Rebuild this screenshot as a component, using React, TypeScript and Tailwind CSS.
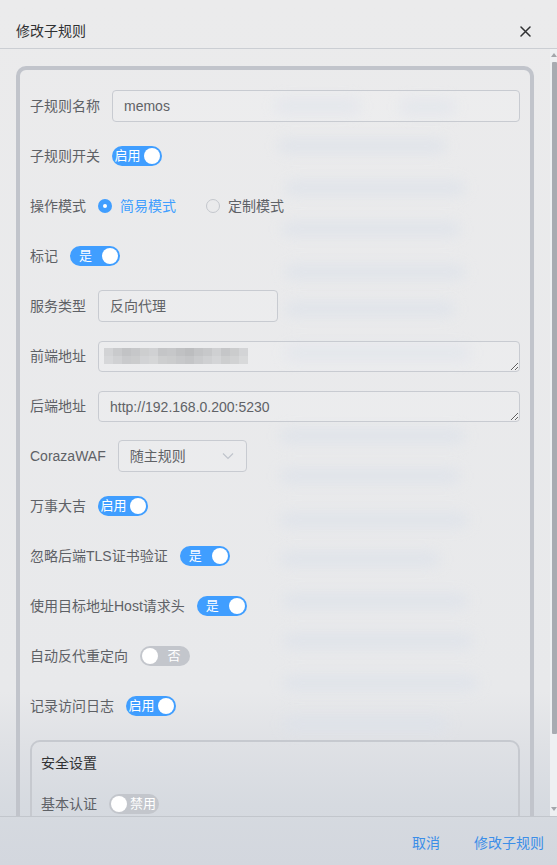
import React from "react";

const FONT = { fontFamily: '"Liberation Sans", "Noto Sans CJK SC", sans-serif' };

function Toggle({ on, text }: { on: boolean; text: string }) {
  return on ? (
    <div className="flex h-[20px] w-[50px] items-center rounded-[10px] bg-[#409eff]">
      <span className="w-[31px] text-center text-[13px] leading-[20px] text-white">{text}</span>
      <span className="ml-auto mr-[2px] h-[16px] w-[16px] rounded-full bg-white" />
    </div>
  ) : (
    <div className="flex h-[20px] w-[50px] items-center rounded-[10px] bg-[#c3c6cc]">
      <span className="ml-[2px] h-[16px] w-[16px] rounded-full bg-white" />
      <span className="flex-1 text-center text-[13px] leading-[20px] text-white">{text}</span>
    </div>
  );
}

function Row({ label, children, last }: { label: string; children: React.ReactNode; last?: boolean }) {
  return (
    <div className={`flex h-[32px] items-center ${last ? "" : "mb-[18px]"}`}>
      <span className="shrink-0 pr-[12px] text-[14px] leading-[32px] text-[#5e6166]">{label}</span>
      {children}
    </div>
  );
}

const mosaic = [
  ["#d2d3d5", "#c9cacc", "#c2c3c5", "#c6c7c9", "#cdcecf", "#d0d1d3", "#c4c5c7", "#c6c7c9", "#c0c1c3", "#bcbdbf", "#c3c4c6", "#c7c8ca", "#cfd0d2", "#c5c6c8", "#cbcccd", "#d3d4d6"],
  ["#d6d7d9", "#d0d1d3", "#c9cacc", "#cbcccd", "#d2d3d5", "#d5d6d7", "#cdcecf", "#cbcccd", "#c7c8ca", "#c4c5c7", "#cacbcd", "#cfd0d2", "#d4d5d7", "#cdcecf", "#d1d2d3", "#d8d9da"],
];

const bands = [
  { t: 100, l: 275, w: 85 },
  { t: 101, l: 400, w: 55 },
  { t: 140, l: 278, w: 168 },
  { t: 182, l: 285, w: 180 },
  { t: 223, l: 282, w: 178 },
  { t: 266, l: 285, w: 180 },
  { t: 303, l: 285, w: 170 },
  { t: 347, l: 285, w: 185 },
  { t: 430, l: 280, w: 185 },
  { t: 470, l: 280, w: 180 },
  { t: 514, l: 280, w: 188 },
  { t: 553, l: 280, w: 160 },
  { t: 595, l: 283, w: 185 },
  { t: 635, l: 283, w: 190 },
  { t: 677, l: 283, w: 195 },
  { t: 718, l: 283, w: 165 },
];

export default function App() {
  return (
    <div className="relative h-[865px] w-[557px] overflow-hidden" style={FONT}>
      {/* frosted background */}
      <div className="absolute inset-0 bg-[linear-gradient(to_bottom,#ebebec_0%,#e8e9eb_80%,#dfe1e5_86%,#d6dae0_93%,#d3d7de_100%)]">
        {bands.map((b, i) => (
          <div
            key={i}
            className="absolute h-[14px] rounded-full bg-[#dde2ea] opacity-80 blur-[7px]"
            style={{ top: b.t - 1, left: b.l, width: b.w }}
          />
        ))}
      </div>

      <div className="relative flex h-full flex-col">
        {/* header */}
        <div className="flex h-[49px] shrink-0 items-start justify-between border-b border-[#cbced3] pl-[16px] pr-[26px] pt-[20px]">
          <span className="text-[14px] leading-[22px] text-[#303133]">修改子规则</span>
          <svg width="11" height="11" viewBox="0 0 11 11" className="mt-[6px]">
            <path d="M1 1L10 10M10 1L1 10" stroke="#303133" strokeWidth="1.5" strokeLinecap="round" />
          </svg>
        </div>

        {/* body */}
        <div className="flex min-h-0 flex-1 overflow-hidden">
          <div className="w-[550px] shrink-0 px-[16px] pt-[17px]">
            <div className="rounded-[10px] border-[4px] border-[#c1c4cb] px-[10px] pt-[20px]">
              <Row label="子规则名称">
                <div className="flex h-[32px] flex-1 items-center rounded-[4px] border border-[#c8cbd1] bg-white/10 px-[11px] text-[14px] text-[#606266]">
                  memos
                </div>
              </Row>
              <Row label="子规则开关">
                <Toggle on text="启用" />
              </Row>
              <Row label="操作模式">
                <div className="flex items-center">
                  <span className="flex h-[14px] w-[14px] items-center justify-center rounded-full bg-[#409eff]">
                    <span className="h-[4px] w-[4px] rounded-full bg-white" />
                  </span>
                  <span className="ml-[8px] text-[14px] text-[#409eff]">简易模式</span>
                  <span className="ml-[30px] h-[14px] w-[14px] rounded-full border border-[#c4c7cd]" />
                  <span className="ml-[8px] text-[14px] text-[#5e6166]">定制模式</span>
                </div>
              </Row>
              <Row label="标记">
                <Toggle on text="是" />
              </Row>
              <Row label="服务类型">
                <div className="flex h-[32px] w-[180px] items-center rounded-[4px] border border-[#c8cbd1] bg-white/10 px-[11px] text-[14px] text-[#606266]">
                  反向代理
                </div>
              </Row>
              <Row label="前端地址">
                <div className="relative flex h-[31px] flex-1">
                  <textarea
                    readOnly
                    rows={1}
                    value=""
                    className="h-[31px] w-full resize-y rounded-[4px] border border-[#c8cbd1] bg-white/10 px-[11px] py-[5px] text-[14px] leading-[20px] text-[#606266] outline-none"
                  />
                  <div className="absolute left-[6px] top-[7px] flex flex-col">
                    {mosaic.map((r, i) => (
                      <div key={i} className="flex">
                        {r.map((c, j) => (
                          <div key={j} className="h-[8px] w-[9px]" style={{ background: c }} />
                        ))}
                      </div>
                    ))}
                  </div>
                </div>
              </Row>
              <Row label="后端地址">
                <textarea
                  readOnly
                  rows={1}
                  value="http://192.168.0.200:5230"
                  className="h-[31px] flex-1 resize-y rounded-[4px] border border-[#c8cbd1] bg-white/10 px-[11px] py-[5px] text-[14px] leading-[20px] text-[#606266] outline-none"
                  style={FONT}
                />
              </Row>
              <Row label="CorazaWAF">
                <div className="flex h-[32px] w-[129px] items-center justify-between rounded-[4px] border border-[#c8cbd1] bg-white/10 pl-[11px] pr-[12px] text-[14px] text-[#606266]">
                  <span>随主规则</span>
                  <svg width="12" height="8" viewBox="0 0 12 8">
                    <path d="M1 1.5L6 6.5L11 1.5" stroke="#c0c4cc" strokeWidth="1.2" fill="none" />
                  </svg>
                </div>
              </Row>
              <Row label="万事大吉">
                <Toggle on text="启用" />
              </Row>
              <Row label="忽略后端TLS证书验证">
                <Toggle on text="是" />
              </Row>
              <Row label="使用目标地址Host请求头">
                <Toggle on text="是" />
              </Row>
              <Row label="自动反代重定向">
                <Toggle on={false} text="否" />
              </Row>
              <Row label="记录访问日志">
                <Toggle on text="启用" />
              </Row>
              <div className="rounded-[10px] border-2 border-[#c6c9cf] px-[9px] pb-[20px] pt-[10px]">
                <div className="mb-[14px] text-[14px] leading-[22px] text-[#303133]">安全设置</div>
                <Row label="基本认证" last>
                  <Toggle on={false} text="禁用" />
                </Row>
              </div>
            </div>
          </div>
          {/* scrollbar */}
          <div className="flex w-[7px] shrink-0 flex-col items-center bg-[#eef0f2]">
            <div className="mt-[4px] h-0 w-0 border-x-[3px] border-b-[4px] border-x-transparent border-b-[#a3a6ab]" />
            <div className="ml-[2px] mt-[5px] h-[672px] w-[5px] rounded-[1px] bg-[#a8abb1]" />
            <div className="mt-auto mb-[5px] h-0 w-0 border-x-[3px] border-t-[4px] border-x-transparent border-t-[#a3a6ab]" />
          </div>
        </div>

        {/* footer */}
        <div className="flex h-[49px] shrink-0 items-center justify-end gap-[34px] border-t border-[#c2c6cc] pr-[13px] pt-[5px]">
          <span className="text-[14px] text-[#3b8ee8]">取消</span>
          <span className="text-[14px] text-[#3b8ee8]">修改子规则</span>
        </div>
      </div>
    </div>
  );
}
